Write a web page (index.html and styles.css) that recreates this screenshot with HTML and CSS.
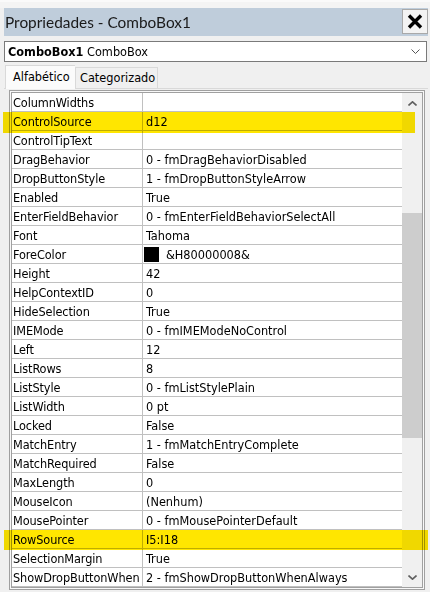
FILE: index.html
```html
<!DOCTYPE html>
<html lang="pt">
<head>
<meta charset="utf-8">
<link rel="stylesheet" href="styles.css">
</head>
<body>
<div class="topstrip"></div>
<div class="win">
  <div class="titlebar">
    <span class="title">Propriedades - ComboBox1</span>
    <div class="close">
      <svg width="16" height="15" viewBox="0 0 16 15"><path d="M2 1.5 L14 13.5 M14 1.5 L2 13.5" stroke="#000" stroke-width="3.4" fill="none"/></svg>
    </div>
  </div>
  <div class="combo">
    <span class="combo-text"><b>ComboBox1</b> ComboBox</span>
    <svg class="chev" width="9" height="5" viewBox="0 0 9 5"><path d="M0.5 0.5 L4.5 4.5 L8.5 0.5" stroke="#555" stroke-width="1" fill="none"/></svg>
  </div>
  <div class="tabs">
    <div class="tab active">Alfabético</div>
    <div class="tab">Categorizado</div>
  </div>
  <div class="panel">
    <div class="frame">
      <div class="inner">
        <div class="rows">
          <div class="row"><div class="name">ColumnWidths</div><div class="val"></div></div>
          <div class="row"><div class="name">ControlSource</div><div class="val">d12</div></div>
          <div class="row"><div class="name">ControlTipText</div><div class="val"></div></div>
          <div class="row"><div class="name">DragBehavior</div><div class="val">0 - fmDragBehaviorDisabled</div></div>
          <div class="row"><div class="name">DropButtonStyle</div><div class="val">1 - fmDropButtonStyleArrow</div></div>
          <div class="row"><div class="name">Enabled</div><div class="val">True</div></div>
          <div class="row"><div class="name">EnterFieldBehavior</div><div class="val">0 - fmEnterFieldBehaviorSelectAll</div></div>
          <div class="row"><div class="name">Font</div><div class="val">Tahoma</div></div>
          <div class="row"><div class="name">ForeColor</div><div class="val"><span class="swatch"></span>&amp;H80000008&amp;</div></div>
          <div class="row"><div class="name">Height</div><div class="val">42</div></div>
          <div class="row"><div class="name">HelpContextID</div><div class="val">0</div></div>
          <div class="row"><div class="name">HideSelection</div><div class="val">True</div></div>
          <div class="row"><div class="name">IMEMode</div><div class="val">0 - fmIMEModeNoControl</div></div>
          <div class="row"><div class="name">Left</div><div class="val">12</div></div>
          <div class="row"><div class="name">ListRows</div><div class="val">8</div></div>
          <div class="row"><div class="name">ListStyle</div><div class="val">0 - fmListStylePlain</div></div>
          <div class="row"><div class="name">ListWidth</div><div class="val">0 pt</div></div>
          <div class="row"><div class="name">Locked</div><div class="val">False</div></div>
          <div class="row"><div class="name">MatchEntry</div><div class="val">1 - fmMatchEntryComplete</div></div>
          <div class="row"><div class="name">MatchRequired</div><div class="val">False</div></div>
          <div class="row"><div class="name">MaxLength</div><div class="val">0</div></div>
          <div class="row"><div class="name">MouseIcon</div><div class="val">(Nenhum)</div></div>
          <div class="row"><div class="name">MousePointer</div><div class="val">0 - fmMousePointerDefault</div></div>
          <div class="row"><div class="name">RowSource</div><div class="val">I5:I18</div></div>
          <div class="row"><div class="name">SelectionMargin</div><div class="val">True</div></div>
          <div class="row"><div class="name">ShowDropButtonWhen</div><div class="val">2 - fmShowDropButtonWhenAlways</div></div>
        </div>
        <div class="scrollbar">
          <div class="sb-btn"><svg width="9" height="5" viewBox="0 0 9 5"><path d="M0.5 4.5 L4.5 0.8 L8.5 4.5" stroke="#606060" stroke-width="1.6" fill="none"/></svg></div>
          <div class="sb-gap"></div>
          <div class="sb-thumb"></div>
          <div class="sb-rest"></div>
          <div class="sb-btn"><svg width="9" height="5" viewBox="0 0 9 5"><path d="M0.5 0.5 L4.5 4.2 L8.5 0.5" stroke="#606060" stroke-width="1.6" fill="none"/></svg></div>
        </div>
      </div>
    </div>
  </div>
</div>
<div class="hl hl1"></div>
<div class="hl hl2"></div>
</body>
</html>
```
FILE: styles.css
```css
* { box-sizing: border-box; }
html, body { margin: 0; padding: 0; }
body {
  width: 430px;
  height: 592px;
  overflow: hidden;
  background: #f0f0f0;
  font-family: "DejaVu Sans", "Liberation Sans", sans-serif;
  font-stretch: condensed;
  font-size: 12.6px;
  color: #000;
  position: relative;
}
.topstrip {
  height: 8px;
  background: #f4f4f4;
  border-top: 2px solid #fafafa;
}
.win {
  margin-left: 4px;
  width: 424px;
}
.titlebar {
  height: 28px;
  background: #bfcddb;
  display: flex;
  justify-content: space-between;
  align-items: flex-start;
  padding-top: 1px;
}
.title {
  font-family: "Lato", "Noto Sans", sans-serif;
  font-stretch: normal;
  font-size: 15.4px;
  line-height: 26px;
  color: #1a1a1a;
  padding-left: 1px;
}
.close {
  width: 26px;
  height: 25px;
  background: #f3f3f3;
  border: 1px solid #a9a9a9;
  display: flex;
  align-items: center;
  justify-content: center;
}
.combo {
  margin-top: 5px;
  width: 423px;
  height: 21px;
  background: #fff;
  border: 1px solid #7a7a7a;
  display: flex;
  align-items: center;
  justify-content: space-between;
  padding: 0 6px 0 3px;
}
.combo-text { line-height: 19px; }
.tabs {
  margin-top: 3px;
  height: 23px;
  display: flex;
  align-items: flex-end;
  position: relative;
  z-index: 1;
}
.tab {
  height: 21px;
  width: 83px;
  border: 1px solid #d9d9d9;
  border-bottom: none;
  background: #f0f0f0;
  padding-left: 4px;
  line-height: 20px;
}
.tab.active {
  margin-left: 1px;
  width: 70px;
  height: 24px;
  margin-bottom: -1px;
  background: #fbfbfb;
  padding-left: 7px;
  padding-top: 1px;
  line-height: 20px;
  border-right: none;
}
.panel {
  border-top: 1px solid #d9d9d9;
  padding: 1px 0 0 5px;
}
.frame {
  width: 416px;
  height: 500px;
  border: 1px solid #a0a0a0;
  padding: 1px;
  background: #f8f8f8;
}
.inner {
  border: 1px solid #a0a0a0;
  display: flex;
  height: 496px;
  background: #fff;
}
.rows { width: 390px; }
.row {
  height: 19px;
  display: flex;
  border-bottom: 1px solid #c0c0c0;
  line-height: 17px;
  padding-top: 1px;
  white-space: nowrap;
}
.name {
  width: 131px;
  border-right: 1px solid #c0c0c0;
  padding-left: 1px;
  margin-top: -1px;
  padding-top: 1px;
  height: 18px;
  letter-spacing: -0.1px;
}
.val {
  padding-left: 3px;
  display: flex;
  align-items: center;
  height: 17px;
}
.swatch {
  width: 15px;
  height: 15px;
  background: #000;
  margin-left: -2px;
  margin-right: 7px;
}
.scrollbar {
  width: 20px;
  background: #f0f0f0;
  display: flex;
  flex-direction: column;
}
.sb-btn {
  height: 20px;
  display: flex;
  align-items: center;
  justify-content: center;
}
.sb-gap { height: 100px; }
.sb-thumb { height: 225px; background: #cdcdcd; }
.sb-rest { flex: 1; }
.hl {
  position: absolute;
  background: #ffe600;
  mix-blend-mode: multiply;
}
.hl1 { left: 3px; top: 112px; width: 412px; height: 21px; }
.hl2 { left: 4px; top: 530px; width: 424px; height: 20px; }
```
